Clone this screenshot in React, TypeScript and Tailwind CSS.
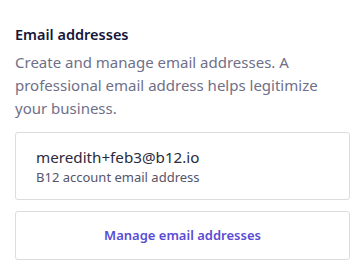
export default function App() {
  return (
    <div className="min-h-screen bg-white pl-[15px] pt-[25px] font-['Segoe_UI','Noto_Sans',sans-serif]">
      <div className="w-[335px]">
        <h2 className="text-[14.5px] leading-[18px] font-semibold text-[#16163a]">Email addresses</h2>
        <p className="mt-[8px] text-[15px] leading-[23px] text-[#6f6f88]">
          Create and manage email addresses. A professional email address helps legitimize your business.
        </p>

        <div className="mt-[12px] rounded-[3px] border border-[#dcdce0] px-5 pt-[14px] pb-[13px]">
          <div className="mb-px text-[15.2px] leading-[20px] text-[#2b2b3b]">meredith+feb3@b12.io</div>
          <div className="text-[13px] leading-[18px] text-[#55556a]">B12 account email address</div>
        </div>

        <button className="mt-[11px] flex h-[49px] w-full items-center justify-center rounded-[3px] border border-[#dcdce0] bg-white text-[13px] font-semibold text-[#5a4bd4]">
          Manage email addresses
        </button>
      </div>
    </div>
  );
}
